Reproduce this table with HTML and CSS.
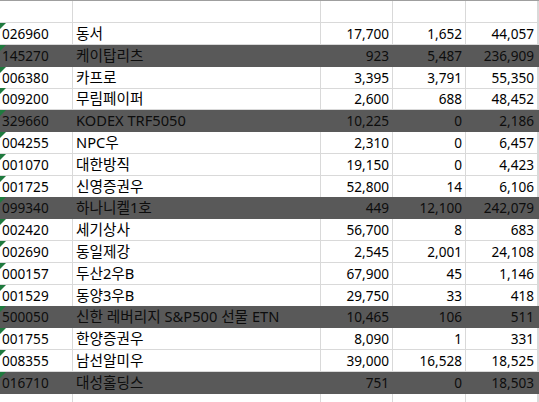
FILE: index.html
```html
<!DOCTYPE html>
<html lang="ko">
<head>
<meta charset="utf-8">
<link rel="stylesheet" href="styles.css">
</head>
<body>
<div class="sheet">
  <div class="row blank"><div class="c"></div><div class="c"></div><div class="c"></div><div class="c"></div><div class="c"></div><div class="c"></div></div>

  <div class="row"><div class="c code">026960</div><div class="c name">동서</div><div class="c num">17,700</div><div class="c num">1,652</div><div class="c num">44,057</div><div class="c"></div></div>
  <div class="row dark"><div class="c code">145270</div><div class="c name">케이탑리츠</div><div class="c num">923</div><div class="c num">5,487</div><div class="c num">236,909</div><div class="c"></div></div>
  <div class="row"><div class="c code">006380</div><div class="c name">카프로</div><div class="c num">3,395</div><div class="c num">3,791</div><div class="c num">55,350</div><div class="c"></div></div>
  <div class="row"><div class="c code">009200</div><div class="c name">무림페이퍼</div><div class="c num">2,600</div><div class="c num">688</div><div class="c num">48,452</div><div class="c"></div></div>
  <div class="row dark"><div class="c code">329660</div><div class="c name">KODEX TRF5050</div><div class="c num">10,225</div><div class="c num">0</div><div class="c num">2,186</div><div class="c"></div></div>
  <div class="row"><div class="c code">004255</div><div class="c name">NPC우</div><div class="c num">2,310</div><div class="c num">0</div><div class="c num">6,457</div><div class="c"></div></div>
  <div class="row"><div class="c code">001070</div><div class="c name">대한방직</div><div class="c num">19,150</div><div class="c num">0</div><div class="c num">4,423</div><div class="c"></div></div>
  <div class="row"><div class="c code">001725</div><div class="c name">신영증권우</div><div class="c num">52,800</div><div class="c num">14</div><div class="c num">6,106</div><div class="c"></div></div>
  <div class="row dark"><div class="c code">099340</div><div class="c name">하나니켈1호</div><div class="c num">449</div><div class="c num">12,100</div><div class="c num">242,079</div><div class="c"></div></div>
  <div class="row"><div class="c code">002420</div><div class="c name">세기상사</div><div class="c num">56,700</div><div class="c num">8</div><div class="c num">683</div><div class="c"></div></div>
  <div class="row"><div class="c code">002690</div><div class="c name">동일제강</div><div class="c num">2,545</div><div class="c num">2,001</div><div class="c num">24,108</div><div class="c"></div></div>
  <div class="row"><div class="c code">000157</div><div class="c name">두산2우B</div><div class="c num">67,900</div><div class="c num">45</div><div class="c num">1,146</div><div class="c"></div></div>
  <div class="row"><div class="c code">001529</div><div class="c name">동양3우B</div><div class="c num">29,750</div><div class="c num">33</div><div class="c num">418</div><div class="c"></div></div>
  <div class="row dark"><div class="c code">500050</div><div class="c name">신한 레버리지 S&amp;P500 선물 ETN</div><div class="c num">10,465</div><div class="c num">106</div><div class="c num">511</div><div class="c"></div></div>
  <div class="row"><div class="c code">001755</div><div class="c name">한양증권우</div><div class="c num">8,090</div><div class="c num">1</div><div class="c num">331</div><div class="c"></div></div>
  <div class="row"><div class="c code">008355</div><div class="c name">남선알미우</div><div class="c num">39,000</div><div class="c num">16,528</div><div class="c num">18,525</div><div class="c"></div></div>
  <div class="row dark"><div class="c code">016710</div><div class="c name">대성홀딩스</div><div class="c num">751</div><div class="c num">0</div><div class="c num">18,503</div><div class="c"></div></div>

  <div class="row blank"><div class="c"></div><div class="c"></div><div class="c"></div><div class="c"></div><div class="c"></div><div class="c"></div></div>
</div>
</body>
</html>
```
FILE: styles.css
```css
html, body {
  margin: 0;
  padding: 0;
  background: #ffffff;
  overflow: hidden;
}

.sheet {
  width: 539px;
  height: 402px;
  overflow: hidden;
  border-top: 1px solid #9f9f9f;
  font-family: "Noto Sans", "Noto Sans CJK KR", sans-serif;
  font-size: 13.6px;
  color: #000;
}

.row {
  display: grid;
  grid-template-columns: 73px 248px 72px 73px 72px 1fr;
  height: 21.8px;
}

.row.blank {
  height: 22px;
}

.c {
  box-sizing: border-box;
  border-right: 1px solid #d9d9d9;
  border-bottom: 1px solid #d9d9d9;
  line-height: 21px;
  white-space: nowrap;
  overflow: visible;
  position: relative;
}

.dark .c {
  background: #595959;
  border-color: #595959;
  color: #0d0d0d;
}

.code {
  padding-left: 2px;
}

.code::before {
  content: "";
  position: absolute;
  left: 0;
  top: 0;
  width: 0;
  height: 0;
  border-top: 6px solid #1f7a3e;
  border-right: 6px solid transparent;
}

.name {
  padding-left: 3px;
  font-size: 14.67px;
}

.num {
  text-align: right;
  padding-right: 3px;
}
```
